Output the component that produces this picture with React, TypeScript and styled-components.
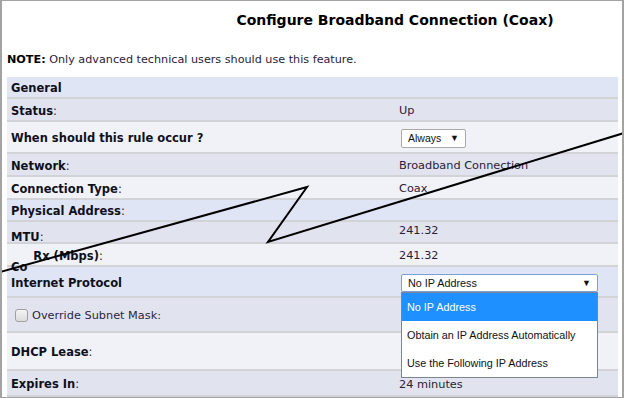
import React from 'react'
import styled, {createGlobalStyle} from 'styled-components'

const GlobalStyle = createGlobalStyle`
  html, body {
    margin: 0;
    padding: 0;
    background: #fff;
  }
  body {
    font-family: "DejaVu Sans", Verdana, sans-serif;
    color: #1c1c28;
  }
`

const Frame = styled.div`
  position: relative;
  box-sizing: border-box;
  width: 624px;
  height: 398px;
  border: 1px solid #a3a3a3;
  border-left-width: 2px;
  border-right-width: 2px;
  background: #fff;
  overflow: hidden;
`

const Title = styled.h1`
  margin: 0;
  padding: 10px 0 0 166px;
  height: 28px;
  text-align: center;
  font-size: 14px;
  font-weight: bold;
  color: #000;
  line-height: 18px;
`

const Note = styled.p`
  margin: 14px 0 0 5px;
  font-size: 11.2px;
  line-height: 14px;
  color: #2a2238;
  b {
    color: #000;
  }
`

const Table = styled.div`
  margin: 10px 4px 0 5px;
  display: flex;
  flex-direction: column;
`

type Tone = 'head' | 'dark' | 'light'

const tones: Record<Tone, string> = {
  head: '#dfe5f4',
  dark: '#e1e4ef',
  light: '#f1f2f8',
}

const Row = styled.div<{ $tone: Tone; $h: number }>`
  box-sizing: border-box;
  display: grid;
  grid-template-columns: 392px 1fr;
  align-items: center;
  height: ${p => p.$h}px;
  padding-top: 2px;
  background: ${p => tones[p.$tone]};
  border-bottom: 2px solid #d2d3d7;
`

const Label = styled.div<{ $shift?: number }>`
  padding-left: 4px;
  font-size: 11.5px;
  font-weight: bold;
  color: #10101c;
  white-space: nowrap;
  transform: translateY(${p => p.$shift ?? 0}px);
`

const Plain = styled.span`
  font-weight: normal;
  color: #2e2440;
`

const Value = styled.div<{ $shift?: number }>`
  font-size: 11.3px;
  color: #2a2036;
  transform: translateY(${p => p.$shift ?? 0}px);
`

const Cut = styled.span`
  display: inline-block;
  transform: translateY(11px);
  margin-right: 6px;
`

const SelectBox = styled.div<{ $w: number; $focus?: boolean }>`
  position: relative;
  box-sizing: border-box;
  margin-left: 2px;
  width: ${p => p.$w}px;
  height: ${p => (p.$focus ? 18 : 19)}px;
  padding: 0 6px;
  display: flex;
  align-items: center;
  justify-content: space-between;
  background: #fff;
  border: 1px solid ${p => (p.$focus ? '#7d9fd6' : '#a9a9a9')};
  border-radius: 2px;
  font-family: "Liberation Sans", Arial, sans-serif;
  font-size: ${p => (p.$focus ? 10.8 : 10.5)}px;
  color: #111;
`

const Arrow = styled.span`
  font-size: 9px;
  color: #111;
`

const Menu = styled.div`
  position: absolute;
  top: 17px;
  left: -1px;
  width: 197px;
  box-sizing: border-box;
  background: #fff;
  border: 1px solid #7a8694;
  z-index: 2;
`

const Option = styled.div<{ $on?: boolean }>`
  height: 28px;
  display: flex;
  align-items: center;
  padding-left: 5px;
  font-family: "Liberation Sans", Arial, sans-serif;
  font-size: 10.8px;
  background: ${p => (p.$on ? '#1e90ff' : '#fff')};
  color: ${p => (p.$on ? '#fff' : '#111')};
`

const CheckRow = styled.label`
  display: flex;
  align-items: center;
  gap: 4px;
  padding-left: 8px;
  font-size: 11.3px;
  color: #2e2440;
`

const Box = styled.span`
  width: 11px;
  height: 11px;
  border: 1px solid #a0a0a0;
  border-radius: 3px;
  background: linear-gradient(#f4f4f4, #dcdcdc);
`

const Overlay = styled.svg`
  position: absolute;
  left: -2px;
  top: -1px;
  pointer-events: none;
`

export default function App() {
  return (
    <>
      <GlobalStyle/>
      <Frame>
        <Title>Configure Broadband Connection (Coax)</Title>
        <Note><b>NOTE:</b> Only advanced technical users should use this feature.</Note>
        <Table>
          <Row $tone="head" $h={22}><Label>General</Label></Row>
          <Row $tone="dark" $h={23}><Label>Status<Plain>:</Plain></Label><Value>Up</Value></Row>
          <Row $tone="light" $h={32}>
            <Label>When should this rule occur ?</Label>
            <SelectBox $w={65}>Always<Arrow>▼</Arrow></SelectBox>
          </Row>
          <Row $tone="dark" $h={23}><Label>Network<Plain>:</Plain></Label><Value>Broadband Connection</Value></Row>
          <Row $tone="light" $h={23}><Label>Connection Type<Plain>:</Plain></Label><Value>Coax</Value></Row>
          <Row $tone="head" $h={22}><Label>Physical Address<Plain>:</Plain></Label></Row>
          <Row $tone="dark" $h={22}><Label $shift={4}>MTU<Plain>:</Plain></Label><Value $shift={-3}>241.32</Value></Row>
          <Row $tone="light" $h={23}><Label><Cut>Co</Cut>Rx (Mbps)<Plain>:</Plain></Label><Value>241.32</Value></Row>
          <Row $tone="head" $h={31}>
            <Label>Internet Protocol</Label>
            <SelectBox $w={197} $focus>
              No IP Address<Arrow>▼</Arrow>
              <Menu>
                <Option $on>No IP Address</Option>
                <Option>Obtain an IP Address Automatically</Option>
                <Option>Use the Following IP Address</Option>
              </Menu>
            </SelectBox>
          </Row>
          <Row $tone="dark" $h={35}><CheckRow><Box/>Override Subnet Mask:</CheckRow></Row>
          <Row $tone="light" $h={38}><Label>DHCP Lease<Plain>:</Plain></Label></Row>
          <Row $tone="dark" $h={26}><Label>Expires In<Plain>:</Plain></Label><Value>24 minutes</Value></Row>
        </Table>
        <Overlay width="624" height="398" viewBox="0 0 624 398">
          <polyline points="0,272 307,187 268,242 624,133" fill="none" stroke="#000" strokeWidth="2"/>
        </Overlay>
      </Frame>
    </>
  )
}
